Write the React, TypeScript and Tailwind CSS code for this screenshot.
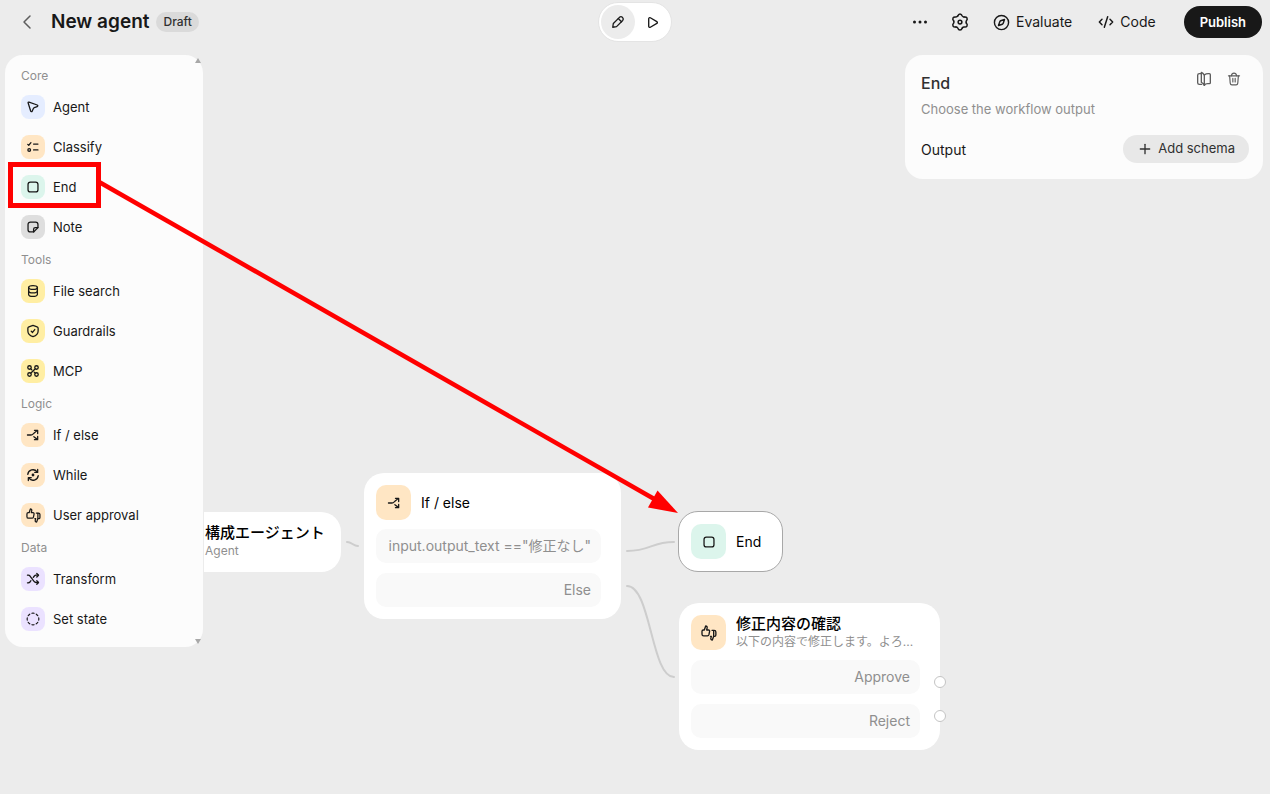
import type { ReactNode } from "react";
import { ChevronLeft, CircleDashed, CodeXml, Compass, Play, Plus } from "lucide-react";

type GlyphProps = { size?: number; strokeWidth?: number };

function Glyph({
  size = 14,
  strokeWidth = 2.2,
  children,
}: GlyphProps & { children: ReactNode }) {
  return (
    <svg
      width={size}
      height={size}
      viewBox="0 0 24 24"
      fill="none"
      stroke="currentColor"
      strokeWidth={strokeWidth}
      strokeLinecap="round"
      strokeLinejoin="round"
      aria-hidden="true"
    >
      {children}
    </svg>
  );
}

function CursorIcon(props: GlyphProps) {
  return (
    <Glyph {...props}>
      <path d="M3.700 5.200C3.200 4 4 3.200 5.200 3.600l14 5c1.500.5 1.400 2.200 0 2.700l-5 1.700c-.6.2-1 .6-1.300 1.200l-2.200 4.800c-.7 1.300-2.300 1.200-2.700-.2z" />
    </Glyph>
  );
}

function ClassifyIcon(props: GlyphProps) {
  return (
    <Glyph {...props}>
      <path d="M3 7.500l1.700 1.500L8.500 4.500" />
      <path d="M13 7h7.500M13 17h7.500" />
      <circle cx="5.500" cy="17" r="2.300" />
    </Glyph>
  );
}

function EndIcon(props: GlyphProps) {
  return (
    <Glyph {...props}>
      <rect x="3.500" y="3.500" width="17" height="17" rx="4" />
    </Glyph>
  );
}

function NoteIcon(props: GlyphProps) {
  return (
    <Glyph {...props}>
      <path d="M13 20.500H7.500a4 4 0 0 1-4-4v-9a4 4 0 0 1 4-4h9a4 4 0 0 1 4 4V13z" />
      <path d="M13 20.500V16a3 3 0 0 1 3-3h4.500" />
    </Glyph>
  );
}

function DatabaseIcon(props: GlyphProps) {
  return (
    <Glyph {...props}>
      <ellipse cx="12" cy="6" rx="7.500" ry="3.300" />
      <path d="M4.500 6v12c0 1.800 3.400 3.300 7.500 3.300s7.500-1.500 7.500-3.300V6" />
      <path d="M4.500 12c0 1.800 3.400 3.300 7.500 3.300s7.500-1.500 7.500-3.300" />
    </Glyph>
  );
}

function ShieldIcon(props: GlyphProps) {
  return (
    <Glyph {...props}>
      <path d="M12 2.500l7 2.300c1.200.4 1.800 1.200 1.800 2.500V12c0 5-3.500 8-8.800 9.700C6.700 20 3.200 17 3.200 12V7.300c0-1.300.6-2.100 1.800-2.500z" />
      <path d="M9 12.500l2.200 2 3.800-5" />
    </Glyph>
  );
}

function McpIcon(props: GlyphProps) {
  return (
    <Glyph {...props}>
      <circle cx="6" cy="6" r="3" />
      <circle cx="18" cy="6" r="3" />
      <circle cx="6" cy="18" r="3" />
      <circle cx="18" cy="18" r="3" />
      <path d="M8.500 15.500l7-7M8.500 8.500l1.500 1.500M14 14l1.500 1.500" />
    </Glyph>
  );
}

function BranchIcon(props: GlyphProps) {
  return (
    <Glyph {...props}>
      <path d="M2.500 12h6c2.500 0 3.500-1.500 5-3l5.500-4.500" />
      <path d="M14.500 4h5.500v5.500" />
      <path d="M13.500 15l6 4.500" />
      <path d="M20 14.500V20h-5.500" />
    </Glyph>
  );
}

function LoopIcon(props: GlyphProps) {
  return (
    <Glyph {...props}>
      <path d="M3 11a9 9 0 0 1 16-4.500" />
      <path d="M20 2.500v5h-5" />
      <path d="M21 13a9 9 0 0 1-16 4.500" />
      <path d="M4 21.500v-5h5" />
      <circle cx="12" cy="12" r="1.300" fill="currentColor" />
    </Glyph>
  );
}

function ApprovalIcon(props: GlyphProps) {
  return (
    <Glyph {...props}>
      <path d="M1.500 9.500c0-1.200.8-2 2-2H5l2-6c1.500 0 2.600 1.200 2.200 2.800L8.500 7.500h2.700c1.300 0 2 1 1.700 2.200l-1 4.800c-.3 1.200-1 1.800-2.200 1.800H4c-1.500 0-2.500-1-2.500-2.500z" />
      <path d="M16.500 8h3.300c1.500 0 2.500 1 2.500 2.500v4.500c0 1.200-.8 2-2 2h-1.300l-2 5.500c-1.500 0-2.600-1.200-2.200-2.800l.7-2.700h-1.300" />
      <path d="M19 8.500V16.500" />
    </Glyph>
  );
}

function ShuffleIcon(props: GlyphProps) {
  return (
    <Glyph {...props}>
      <path d="M2.500 5.500h1.300c1.500 0 2.500.7 3.400 1.800l6.600 8.900c.9 1.200 1.900 1.800 3.400 1.800H21" />
      <path d="M2.500 18.500h1.300c1.500 0 2.500-.7 3.400-1.800l1.300-1.800" />
      <path d="M12.500 9.300l1.500-2c.9-1.200 1.900-1.800 3.400-1.800H21" />
      <path d="M18.500 2.500l3 3-3 3M18.500 15l3 3-3 3" />
    </Glyph>
  );
}

function PencilIcon(props: GlyphProps) {
  return (
    <Glyph {...props}>
      <path d="M3 21l1-6.500L14.500 4a3.900 3.900 0 0 1 5.500 5.500L9.500 20z" />
      <path d="M12.500 6l5.500 5.500" />
    </Glyph>
  );
}

// one lobe of the cog, repeated around the centre
const LOBES = [0, 60, 120, 180, 240, 300];

function GearIcon(props: GlyphProps) {
  return (
    <Glyph {...props}>
      {LOBES.map((angle) => (
        <path
          key={angle}
          d="M9 4C10.200.4 13.800.4 15 4Q15.800 5.400 17.430 5.400"
          transform={`rotate(${angle} 12 12)`}
        />
      ))}
      <circle cx="12" cy="12" r="2.500" />
    </Glyph>
  );
}

function BookIcon(props: GlyphProps) {
  return (
    <Glyph {...props}>
      <path d="M12.500 6C11 4 10 2.500 8 2v15c2 .5 3 2 4.500 4.500z" />
      <path d="M8 4H5C3.500 4 2.500 5 2.500 6.500v11C2.500 19 3.500 20 5 20h3.500" />
      <path d="M12.500 6c1.500-1.200 3.500-2 6-2H20c1 0 1.500.5 1.500 1.500v12c0 1-.5 1.500-1.500 1.500h-2.500c-2 0-4 .8-5 2.500" />
    </Glyph>
  );
}

function TrashIcon(props: GlyphProps) {
  return (
    <Glyph {...props}>
      <path d="M2.500 6.500h19" />
      <path d="M7.500 6.500C8 3.500 9.500 2 12 2s4 1.500 4.500 4.500" />
      <path d="M4.500 6.500l1 12.500c.2 1.800 1.200 3 3 3h7c1.800 0 2.800-1.200 3-3l1-12.500" />
      <path d="M10 11v6M14 11v6" />
    </Glyph>
  );
}

const SECTIONS = [
  {
    title: "Core",
    items: [
      { label: "Agent", tone: "bg-[#e5edff]", icon: <CursorIcon /> },
      { label: "Classify", tone: "bg-[#ffe6c4]", icon: <ClassifyIcon /> },
      { label: "End", tone: "bg-[#dcf5ec]", icon: <EndIcon /> },
      { label: "Note", tone: "bg-[#dedede]", icon: <NoteIcon /> },
    ],
  },
  {
    title: "Tools",
    items: [
      { label: "File search", tone: "bg-[#ffeea3]", icon: <DatabaseIcon /> },
      { label: "Guardrails", tone: "bg-[#ffeea3]", icon: <ShieldIcon /> },
      { label: "MCP", tone: "bg-[#ffeea3]", icon: <McpIcon /> },
    ],
  },
  {
    title: "Logic",
    items: [
      { label: "If / else", tone: "bg-[#ffe6c4]", icon: <BranchIcon /> },
      { label: "While", tone: "bg-[#ffe6c4]", icon: <LoopIcon /> },
      {
        label: "User approval",
        tone: "bg-[#ffe6c4]",
        icon: <ApprovalIcon size={15} strokeWidth={2} />,
      },
    ],
  },
  {
    title: "Data",
    items: [
      { label: "Transform", tone: "bg-[#ebe2ff]", icon: <ShuffleIcon /> },
      { label: "Set state", tone: "bg-[#ebe2ff]", icon: <CircleDashed size={14} /> },
    ],
  },
];

function Header() {
  return (
    <header className="relative z-10 grid h-11 grid-cols-[1fr_auto_1fr] items-center px-2">
      <div className="flex items-center pl-[7px]">
        <button type="button" aria-label="Back" className="text-[#5d5d5d]">
          <ChevronLeft size={24} strokeWidth={1.5} />
        </button>
        <h1 className="ml-3 text-[19px] font-semibold">New agent</h1>
        <span className="ml-[7px] flex h-5 items-center rounded-full bg-[#dadada] px-[7px] text-xs font-medium text-[#303030]">
          Draft
        </span>
      </div>

      <div className="flex h-10 items-center rounded-full border border-[#e4e4e4] bg-white px-0.5">
        <button
          type="button"
          aria-label="Edit"
          className="flex size-[34px] items-center justify-center rounded-full bg-[#ececec]"
        >
          <PencilIcon />
        </button>
        <button
          type="button"
          aria-label="Preview"
          className="flex size-[34px] items-center justify-center rounded-full"
        >
          <Play size={13} strokeWidth={2.5} />
        </button>
      </div>

      <div className="flex items-center justify-end text-sm">
        <button type="button" aria-label="More" className="mr-[23px]">
          <svg width="16" height="16" viewBox="0 0 16 16" fill="currentColor">
            <circle cx="2.500" cy="8" r="1.500" />
            <circle cx="8" cy="8" r="1.500" />
            <circle cx="13.500" cy="8" r="1.500" />
          </svg>
        </button>
        <button type="button" aria-label="Settings" className="mr-6">
          <GearIcon size={18} strokeWidth={2} />
        </button>
        <button type="button" className="mr-[26px] flex items-center gap-1.5">
          <Compass size={17} />
          Evaluate
        </button>
        <button type="button" className="mr-7 flex items-center gap-1.5">
          <CodeXml size={16} strokeWidth={2.2} />
          Code
        </button>
        <button
          type="button"
          className="h-8 rounded-full bg-[#181818] px-4 text-[13px] font-semibold text-white"
        >
          Publish
        </button>
      </div>
    </header>
  );
}

function Sidebar() {
  return (
    <nav className="flex w-[198px] rounded-[18px] bg-[#fcfcfc] ring-1 ring-[#ececec]">
      <div className="flex-1 py-2 pl-4">
        {SECTIONS.map((section) => (
          <section key={section.title}>
            <h2 className="flex h-6 items-center pt-0.5 text-xs text-[#8f8f8f]">
              {section.title}
            </h2>
            {section.items.map((item) => (
              <button
                key={item.label}
                type="button"
                className="flex h-10 w-full items-center gap-2 text-[13px]"
              >
                <span
                  className={`flex size-6 items-center justify-center rounded-lg ${item.tone}`}
                >
                  {item.icon}
                </span>
                <span className="pt-0.5">{item.label}</span>
              </button>
            ))}
          </section>
        ))}
      </div>
      <div className="flex w-2 flex-col justify-between py-[3px] text-[#a8a8a8]">
        <svg width="6" height="5" viewBox="0 0 6 5" fill="currentColor">
          <path d="M3 0l3 5H0z" />
        </svg>
        <svg width="6" height="5" viewBox="0 0 6 5" fill="currentColor">
          <path d="M3 5l3-5H0z" />
        </svg>
      </div>
    </nav>
  );
}

function Inspector() {
  return (
    <aside className="w-[358px] rounded-[18px] bg-[#fcfcfc] py-4 pl-4 pr-[14px]">
      <div className="flex items-start justify-between">
        <h2 className="text-base font-medium leading-6 text-[#303030]">End</h2>
        <div className="flex text-[#5d5d5d]">
          <button
            type="button"
            aria-label="Documentation"
            className="flex h-4 w-[30px] items-center justify-center"
          >
            <BookIcon size={16} strokeWidth={2} />
          </button>
          <button
            type="button"
            aria-label="Delete"
            className="flex h-4 w-[30px] items-center justify-center"
          >
            <TrashIcon size={14} strokeWidth={2} />
          </button>
        </div>
      </div>
      <p className="mt-1 text-[13px] leading-5 text-[#8f8f8f]">Choose the workflow output</p>
      <div className="mt-4 flex items-center justify-between">
        <span className="pt-0.5 text-sm">Output</span>
        <button
          type="button"
          className="flex h-7 items-center gap-[5px] rounded-full bg-[#e8e8e8] px-[14px] text-[13px] text-[#303030]"
        >
          <Plus size={16} />
          Add schema
        </button>
      </div>
    </aside>
  );
}

type FlowNodeProps = {
  place: string;
  tone: string;
  icon: ReactNode;
  title: string;
  subtitle?: string;
  rows?: string[];
};

function FlowNode({ place, tone, icon, title, subtitle, rows = [] }: FlowNodeProps) {
  return (
    <div className={`absolute rounded-[20px] bg-white p-3 ${place}`}>
      <div className="flex items-start gap-[10px]">
        <span
          className={`flex size-[35px] shrink-0 items-center justify-center rounded-[10px] ${tone}`}
        >
          {icon}
        </span>
        {subtitle ? (
          <div className="whitespace-nowrap">
            <div className="text-[15px] font-medium leading-[18px] text-black">{title}</div>
            <div className="text-xs leading-[18px] text-[#8f8f8f]">{subtitle}</div>
          </div>
        ) : (
          <div className="self-center text-sm text-black">{title}</div>
        )}
      </div>
      {rows.length > 0 && (
        <div className="mt-[9px] flex flex-col gap-[10px] pr-2">
          {rows.map((row) => (
            <div
              key={row}
              className="flex h-[34px] items-center justify-end whitespace-nowrap rounded-[10px] bg-[#f9f9f9] px-[10px] text-sm text-[#8f8f8f]"
            >
              {row}
            </div>
          ))}
        </div>
      )}
    </div>
  );
}

function Canvas() {
  return (
    <div className="absolute inset-0 overflow-hidden">
      <svg
        className="absolute inset-0 size-full"
        fill="none"
        stroke="#cdcdcd"
        strokeWidth="2"
        strokeLinecap="round"
      >
        <path d="M347 542c5 0 6 4 11 4" />
        <path d="M627 551c24 0 24-9 47-9" />
        <path d="M627 586c24 0 24 91 47 91" />
      </svg>
      <FlowNode
        place="left-[148px] top-[512px] w-[193px]"
        tone="bg-[#e5edff]"
        icon={<CursorIcon />}
        title="構成エージェント"
        subtitle="Agent"
      />
      <FlowNode
        place="left-[364px] top-[473px] w-[257px]"
        tone="bg-[#ffe6c4]"
        icon={<BranchIcon />}
        title="If / else"
        rows={['input.output_text =="修正なし"', "Else"]}
      />
      <FlowNode
        place="left-[678px] top-[511px] w-[105px] border border-[#a8a8a8]"
        tone="bg-[#dcf5ec]"
        icon={<EndIcon />}
        title="End"
      />
      <FlowNode
        place="left-[679px] top-[603px] w-[261px]"
        tone="bg-[#ffe6c4]"
        icon={<ApprovalIcon size={16} strokeWidth={2} />}
        title="修正内容の確認"
        subtitle="以下の内容で修正します。よろ..."
        rows={["Approve", "Reject"]}
      />
      <span className="absolute left-[934px] top-[676px] size-3 rounded-full border border-[#c4c4c4] bg-white" />
      <span className="absolute left-[934px] top-[710px] size-3 rounded-full border border-[#c4c4c4] bg-white" />
    </div>
  );
}

function Callout() {
  return (
    <svg className="pointer-events-none absolute inset-0 z-20 size-full" aria-hidden="true">
      <rect x="10.500" y="164.500" width="88" height="41" fill="none" stroke="#f00" strokeWidth="5" />
      <path d="M100 182.500L656 500" stroke="#f00" strokeWidth="4.500" />
      <path d="M678 513L657.500 490.500L648 507.500z" fill="#f00" />
    </svg>
  );
}

export default function App() {
  return (
    <div className="relative min-h-screen overflow-hidden bg-[#ececec] font-[Inter,'Noto_Sans_CJK_JP',sans-serif] text-[#181818]">
      <Canvas />
      <Header />
      <main className="relative z-10 flex items-start justify-between pl-[5px] pr-[7px] pt-[11px]">
        <Sidebar />
        <Inspector />
      </main>
      <Callout />
    </div>
  );
}
